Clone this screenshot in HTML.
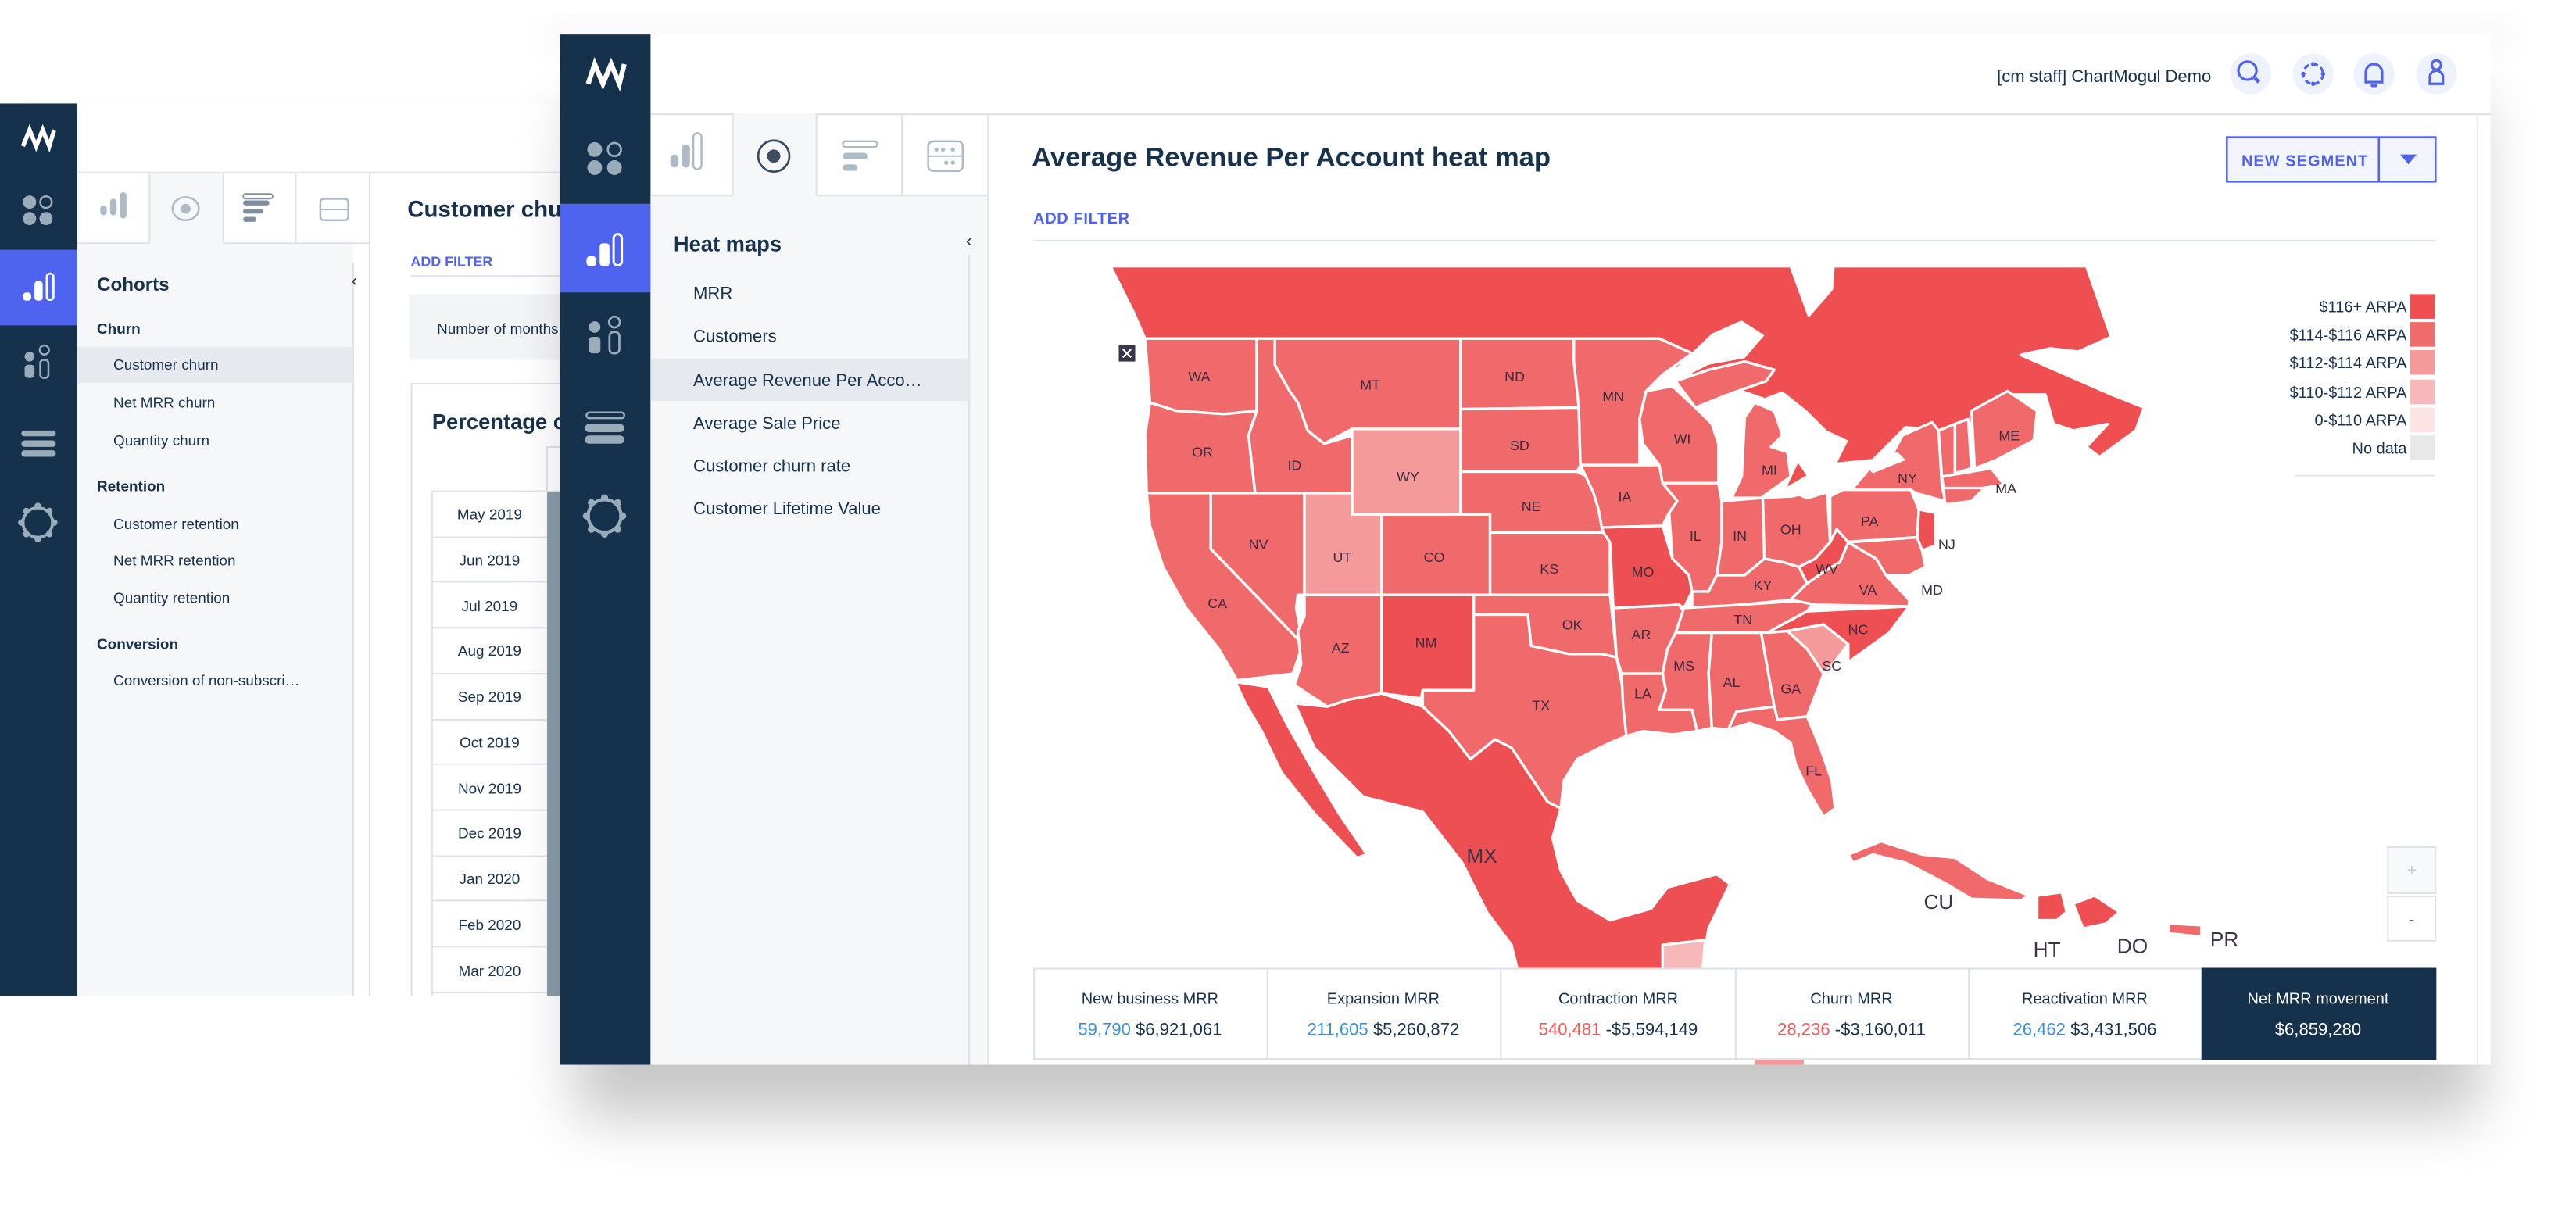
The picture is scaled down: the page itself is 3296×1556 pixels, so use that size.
<!DOCTYPE html>
<html><head><meta charset="utf-8"><style>
html,body{margin:0;padding:0;background:#fff;width:3296px;height:1556px;overflow:hidden}
svg{display:block}
text{font-family:"Liberation Sans",sans-serif}
</style></head><body>
<svg width="3296" height="1556" viewBox="0 0 1568 740" preserveAspectRatio="none" xmlns="http://www.w3.org/2000/svg">
<defs>
<filter id="sh" x="-20%" y="-20%" width="140%" height="150%"><feGaussianBlur stdDeviation="18"/></filter>
<filter id="sh2" x="-20%" y="-20%" width="140%" height="150%"><feGaussianBlur stdDeviation="10"/></filter>
<clipPath id="mapclip"><rect x="602" y="150" width="906" height="498"/></clipPath>
</defs>
<rect width="1568" height="740" fill="#fff"/>
<!-- back window shadow -->
<rect x="5" y="70" width="340" height="545" fill="#000" opacity="0.05" filter="url(#sh2)"/>
<!-- BACK WINDOW -->
<rect x="0" y="63" width="341" height="543" fill="#fff"/>
<rect x="0" y="63" width="47" height="543" fill="#15314b"/>
<rect x="0" y="152" width="47" height="46" fill="#4e63ee"/>
<polyline points="14,89 18,79 22,89 26,79 30,89 33,79" fill="none" stroke="#fff" stroke-width="2.6" stroke-linejoin="miter"/>
<g fill="#9aabb9"><circle cx="18" cy="123" r="4"/><circle cx="18" cy="133" r="4"/><circle cx="28" cy="133" r="4"/></g>
<circle cx="28" cy="123" r="3.5" fill="none" stroke="#9aabb9" stroke-width="1.2"/>
<g fill="#fff"><rect x="14" y="178" width="5" height="5" rx="2"/><rect x="21" y="171" width="5" height="12" rx="2"/></g>
<rect x="28.5" y="166.5" width="4" height="16" rx="2" fill="none" stroke="#fff" stroke-width="1.3"/>
<g fill="#9aabb9"><circle cx="18" cy="217" r="3"/><rect x="15" y="222" width="6" height="8" rx="2"/></g>
<circle cx="27" cy="213" r="2.8" fill="none" stroke="#9aabb9" stroke-width="1.2"/><rect x="24.5" y="219" width="5" height="11" rx="2" fill="none" stroke="#9aabb9" stroke-width="1.2"/>
<g fill="#9aabb9"><rect x="13" y="262" width="21" height="3.5" rx="1.7"/><rect x="13" y="268" width="21" height="4" rx="2"/><rect x="13" y="274" width="21" height="4" rx="2"/></g>
<circle cx="23" cy="318" r="9" fill="none" stroke="#9aabb9" stroke-width="1.8"/>
<g fill="#9aabb9"><circle cx="23" cy="308" r="2"/><circle cx="23" cy="328" r="2"/><circle cx="13" cy="318" r="2"/><circle cx="33" cy="318" r="2"/><circle cx="16" cy="311" r="2"/><circle cx="30" cy="311" r="2"/><circle cx="16" cy="325" r="2"/><circle cx="30" cy="325" r="2"/></g>
<!-- back header/tabs -->
<line x1="47" y1="105" x2="341" y2="105" stroke="#dfe3e8"/>
<rect x="47" y="148" width="168" height="458" fill="#f5f7f9"/>
<rect x="91" y="105" width="45" height="44" fill="#f5f7f9"/>
<g stroke="#dfe3e8" fill="none"><line x1="91" y1="105" x2="91" y2="148"/><line x1="136" y1="105" x2="136" y2="148"/><line x1="180" y1="105" x2="180" y2="148"/><line x1="225" y1="105" x2="225" y2="606"/><line x1="47" y1="148" x2="91" y2="148"/><line x1="136" y1="148" x2="225" y2="148"/><line x1="215" y1="160" x2="215" y2="606"/></g>
<g fill="#aebbc7"><rect x="61" y="125" width="4" height="6" rx="2"/><rect x="67" y="121" width="4" height="10" rx="2"/><rect x="73" y="117" width="4" height="16" rx="2"/></g>
<ellipse cx="113" cy="127" rx="8" ry="7" fill="none" stroke="#aebbc7" stroke-width="1.2"/><circle cx="113" cy="127" r="3" fill="#aebbc7"/>
<g fill="#7f8fa0"><rect x="148" y="122" width="16" height="3" rx="1.5"/><rect x="148" y="127" width="12" height="3" rx="1.5"/><rect x="148" y="132" width="8" height="3" rx="1.5"/></g>
<rect x="148" y="118" width="18" height="3" rx="1.5" fill="none" stroke="#7f8fa0" stroke-width="0.8"/>
<rect x="195" y="121" width="17" height="13" rx="2" fill="none" stroke="#aebbc7" stroke-width="1.2"/><line x1="195" y1="127.5" x2="212" y2="127.5" stroke="#aebbc7"/>
<text x="59" y="177" font-size="11.5" font-weight="bold" fill="#17324d">Cohorts</text>
<text x="214" y="174" font-size="10" fill="#17324d">‹</text>
<rect x="47" y="211" width="168" height="22" fill="#e6eaee"/>
<g font-size="9" fill="#17324d">
<text x="59" y="203" font-weight="bold">Churn</text>
<text x="69" y="225">Customer churn</text><text x="69" y="248">Net MRR churn</text><text x="69" y="271">Quantity churn</text>
<text x="59" y="299" font-weight="bold">Retention</text>
<text x="69" y="322">Customer retention</text><text x="69" y="344">Net MRR retention</text><text x="69" y="367">Quantity retention</text>
<text x="59" y="395" font-weight="bold">Conversion</text>
<text x="69" y="417">Conversion of non-subscri…</text>
</g>
<text x="248" y="132" font-size="14" font-weight="bold" fill="#17324d">Customer churn</text>
<text x="250" y="162" font-size="8.5" font-weight="bold" fill="#4e63ee">ADD FILTER</text>
<line x1="250" y1="168" x2="341" y2="168" stroke="#dfe3e8"/>
<rect x="249" y="179" width="92" height="40" fill="#f2f4f6"/>
<text x="266" y="203" font-size="9" fill="#17324d">Number of months</text>
<rect x="250.5" y="233.5" width="100" height="380" fill="#fff" stroke="#dfe3e8"/>
<text x="263" y="261" font-size="13" font-weight="bold" fill="#17324d">Percentage of</text>
<rect x="333" y="272" width="10" height="334" fill="#8a9caa"/>
<rect x="333" y="272" width="10" height="27" fill="#fff" stroke="#dfe3e8"/>
<g font-size="9" fill="#17324d" text-anchor="middle" stroke="none">
<text x="298" y="316">May 2019</text><text x="298" y="344">Jun 2019</text><text x="298" y="372">Jul 2019</text><text x="298" y="399">Aug 2019</text><text x="298" y="427">Sep 2019</text><text x="298" y="455">Oct 2019</text><text x="298" y="483">Nov 2019</text><text x="298" y="510">Dec 2019</text><text x="298" y="538">Jan 2020</text><text x="298" y="566">Feb 2020</text><text x="298" y="594">Mar 2020</text>
</g>
<g stroke="#dfe3e8"><line x1="263" y1="299" x2="333" y2="299"/><line x1="263" y1="327" x2="333" y2="327"/><line x1="263" y1="354" x2="333" y2="354"/><line x1="263" y1="382" x2="333" y2="382"/><line x1="263" y1="410" x2="333" y2="410"/><line x1="263" y1="438" x2="333" y2="438"/><line x1="263" y1="465" x2="333" y2="465"/><line x1="263" y1="493" x2="333" y2="493"/><line x1="263" y1="521" x2="333" y2="521"/><line x1="263" y1="548" x2="333" y2="548"/><line x1="263" y1="576" x2="333" y2="576"/><line x1="263" y1="604" x2="333" y2="604"/><line x1="263" y1="299" x2="263" y2="606"/></g>
<rect x="0" y="606" width="345" height="134" fill="#fff"/>

<!-- FRONT WINDOW SHADOW -->
<rect x="350" y="60" width="1160" height="620" fill="#000" opacity="0.22" filter="url(#sh)"/>
<rect x="330" y="12" width="1200" height="20" fill="#000" opacity="0.03" filter="url(#sh2)"/>
<!-- FRONT WINDOW -->
<rect x="341" y="21" width="1175" height="627" fill="#fff"/>
<rect x="341" y="21" width="55" height="627" fill="#15314b"/>
<rect x="341" y="124" width="55" height="54" fill="#4e63ee"/>
<polyline points="358,51 362,39 367,51 372,39 377,51 380,39" fill="none" stroke="#fff" stroke-width="3" stroke-linejoin="miter"/>
<g fill="#9aabb9"><circle cx="362" cy="91" r="4.5"/><circle cx="362" cy="102" r="4.5"/><circle cx="374" cy="102" r="4.5"/></g>
<circle cx="374" cy="91" r="4" fill="none" stroke="#9aabb9" stroke-width="1.3"/>
<g fill="#fff"><rect x="357" y="156" width="6" height="6" rx="2"/><rect x="365" y="148" width="6" height="14" rx="2"/></g>
<rect x="373.5" y="142.5" width="5" height="19" rx="2.5" fill="none" stroke="#fff" stroke-width="1.4"/>
<g fill="#9aabb9"><circle cx="362" cy="199" r="3.5"/><rect x="358.5" y="205" width="7" height="10" rx="2"/></g>
<circle cx="374" cy="196" r="3.3" fill="none" stroke="#9aabb9" stroke-width="1.3"/><rect x="371" y="202" width="6" height="13" rx="2.5" fill="none" stroke="#9aabb9" stroke-width="1.3"/>
<g fill="#9aabb9"><rect x="357" y="251" width="23" height="3.5" rx="1.7" fill="none" stroke="#9aabb9" stroke-width="1.2"/><rect x="356" y="258" width="24" height="5" rx="2.5"/><rect x="356" y="265" width="24" height="5" rx="2.5"/></g>
<circle cx="368" cy="314" r="10" fill="none" stroke="#9aabb9" stroke-width="2"/>
<g fill="#9aabb9"><circle cx="368" cy="303" r="2.2"/><circle cx="368" cy="325" r="2.2"/><circle cx="357" cy="314" r="2.2"/><circle cx="379" cy="314" r="2.2"/><circle cx="360" cy="306" r="2.2"/><circle cx="376" cy="306" r="2.2"/><circle cx="360" cy="322" r="2.2"/><circle cx="376" cy="322" r="2.2"/></g>
<!-- header -->
<line x1="396" y1="69.5" x2="1516" y2="69.5" stroke="#dbe1e7"/>
<text x="1346" y="50" font-size="10.5" fill="#17324d" text-anchor="end">[cm staff] ChartMogul Demo</text>
<g fill="#eef2fd"><circle cx="1370" cy="45" r="12.5"/><circle cx="1408" cy="45" r="12.5"/><circle cx="1445" cy="45" r="12.5"/><circle cx="1483" cy="45" r="12.5"/></g>
<g fill="none" stroke="#4e63ee" stroke-width="1.5">
<circle cx="1368" cy="43" r="5.5"/><line x1="1372.5" y1="47.5" x2="1375" y2="50" stroke-width="2.2"/>
<circle cx="1408" cy="45" r="6" stroke-dasharray="3.5 2"/>
<path d="M1440,50 L1440,44 A5,5 0 0 1 1450,44 L1450,50 Z"/>
<circle cx="1483" cy="39.5" r="2.8"/><path d="M1479,51 L1479,47 A4,4 0 0 1 1487,47 L1487,51 Z"/>
</g>
<g fill="#4e63ee"><circle cx="1408" cy="39" r="1.3"/><circle cx="1408" cy="51" r="1.3"/><circle cx="1402" cy="45" r="1.3"/><circle cx="1414" cy="45" r="1.3"/><rect x="1443" y="51" width="4" height="2" rx="1"/></g>
<!-- tabs -->
<rect x="446" y="69" width="51" height="51" fill="#f5f7f9"/>
<rect x="396" y="119" width="205" height="529" fill="#f5f7f9"/>
<g stroke="#dfe3e8" fill="none"><line x1="446" y1="69" x2="446" y2="119"/><line x1="497" y1="69" x2="497" y2="119"/><line x1="549" y1="69" x2="549" y2="119"/><line x1="601.5" y1="69" x2="601.5" y2="648"/><line x1="396" y1="119" x2="446" y2="119"/><line x1="497" y1="119" x2="601" y2="119"/><line x1="590" y1="155" x2="590" y2="648"/></g>
<g fill="#aebbc7"><rect x="408" y="94" width="5" height="8" rx="2.5"/><rect x="415" y="88" width="5" height="14" rx="2.5"/><rect x="422" y="81" width="5" height="22" rx="2.5" fill="none" stroke="#aebbc7" stroke-width="1.2"/></g>
<circle cx="471" cy="95" r="9.5" fill="none" stroke="#3b4d61" stroke-width="1.3"/><circle cx="471" cy="95" r="4" fill="#3b4d61"/>
<rect x="513" y="86" width="21" height="3.5" rx="1.7" fill="none" stroke="#aebbc7" stroke-width="1.1"/><rect x="513" y="93" width="15" height="4" rx="2" fill="#aebbc7"/><rect x="513" y="100" width="9" height="4" rx="2" fill="#aebbc7"/>
<rect x="565" y="86" width="21" height="18" rx="3" fill="none" stroke="#aebbc7" stroke-width="1.2"/><line x1="565" y1="95" x2="586" y2="95" stroke="#aebbc7"/>
<g fill="#aebbc7"><circle cx="570" cy="91" r="1.3"/><circle cx="574" cy="91" r="1.3"/><circle cx="580" cy="91" r="1.3"/><circle cx="576" cy="99" r="1.3"/><circle cx="580" cy="99" r="1.3"/></g>
<text x="410" y="153" font-size="13" font-weight="bold" fill="#17324d">Heat maps</text>
<text x="588" y="150" font-size="11" fill="#17324d">‹</text>
<rect x="396" y="218" width="194" height="26" fill="#e6eaee"/>
<g font-size="10.5" fill="#17324d">
<text x="422" y="182">MRR</text><text x="422" y="208">Customers</text><text x="422" y="235">Average Revenue Per Acco…</text><text x="422" y="261">Average Sale Price</text><text x="422" y="287">Customer churn rate</text><text x="422" y="313">Customer Lifetime Value</text>
</g>
<!-- main -->
<line x1="1508" y1="70" x2="1508" y2="648" stroke="#e8ecef"/>
<text x="628" y="101" font-size="16.5" font-weight="bold" fill="#17324d">Average Revenue Per Account heat map</text>
<rect x="1355.5" y="83.5" width="127" height="27" fill="#f3f5fe" stroke="#4e63ee" stroke-width="1.2"/>
<line x1="1448" y1="84" x2="1448" y2="110" stroke="#4e63ee" stroke-width="1.2"/>
<text x="1403" y="101" font-size="9.5" font-weight="bold" fill="#4e63ee" text-anchor="middle" letter-spacing="0.5">NEW SEGMENT</text>
<path d="M1461,94 L1471,94 L1466,100 Z" fill="#4e63ee"/>
<text x="629" y="136" font-size="9.5" font-weight="bold" fill="#4e63ee" letter-spacing="0.3">ADD FILTER</text>
<line x1="629" y1="146.5" x2="1482" y2="146.5" stroke="#dfe4ea"/>

<!-- MAP -->
<g clip-path="url(#mapclip)" stroke="#fff" stroke-width="1.6" stroke-linejoin="round">
<polygon fill="#ef4f51" points="676,162 1090,162 1101,192 1115,176 1116,162 1270,162 1285,205 1265,214 1248,212 1230,216 1262,230 1285,240 1305,248 1300,262 1278,278 1270,272 1283,258 1262,262 1250,258 1245,240 1225,240 1210,255 1180,262 1160,260 1140,280 1110,283 1100,290 1086,298 1100,268 1080,245 1060,238 1040,232 1010,220 1000,206 697,206 690,190"/>
<g fill="#f06a6b">
<polygon points="697,206 765,206 765,250 745,252 716,250 700,245"/>
<polygon points="700,245 716,250 745,252 765,250 760,265 764,300 698,300 697,265"/>
<polygon points="698,300 737,300 737,334 793,392 787,410 753,414 742,395 722,370 708,345 700,320"/>
<polygon points="737,300 794,300 794,362 790,362 789,370 793,392 737,334"/>
<polygon points="765,206 776,206 776,222 785,238 790,245 796,262 806,270 823,265 823,300 794,300 764,300 760,265 765,250"/>
<polygon points="776,206 889,206 889,261 823,261 806,270 796,262 790,245 785,238 776,222"/>
<polygon points="841,313 907,313 907,362 841,362"/>
<polygon points="794,362 841,362 841,422 820,426 808,430 788,417 792,404 790,384 794,375"/>
<polygon points="889,206 958,206 961,248 889,249"/>
<polygon points="889,249 961,248 962,283 960,287 889,287"/>
<polygon points="889,287 960,287 970,292 975,310 976,324 907,324 907,313 889,313"/>
<polygon points="907,324 976,324 980,330 980,362 907,362"/>
<polygon points="897,362 980,362 982,380 984,400 975,398 955,398 932,393 930,374 897,374"/>
<polygon points="897,374 930,374 932,393 955,398 975,398 984,400 988,420 994,440 992,447 980,452 960,462 952,475 950,492 942,488 930,470 920,455 910,450 895,462 882,445 866,430 866,420 897,420"/>
<polygon points="958,206 1010,206 1030,215 1012,228 1002,238 998,255 998,283 962,283 961,248 958,220"/>
<polygon points="962,283 1010,283 1018,295 1021,305 1016,312 1012,320 975,321 973,310 970,300"/>
<polygon points="982,370 1022,368 1025,372 1020,385 1015,395 1012,410 987,410 984,400"/>
<polygon points="987,410 1012,410 1014,420 1010,432 1030,432 1033,445 1018,447 1000,445 990,448 988,430"/>
<polygon points="1002,238 1018,235 1032,248 1042,258 1046,270 1046,294 1012,294 1010,283 1000,270 998,255"/>
<polygon points="1012,294 1046,294 1048,305 1048,330 1045,350 1040,360 1028,360 1028,350 1018,340 1016,312 1021,305"/>
<polygon points="1048,305 1073,303 1074,340 1062,350 1045,350 1048,330"/>
<polygon points="1058,260 1068,245 1080,250 1085,265 1078,272 1088,275 1090,290 1072,303 1050,303 1052,285"/>
<polygon points="1020,232 1040,225 1062,220 1080,225 1075,232 1052,240 1032,248"/>
<polygon points="1073,303 1091,302 1112,297 1114,330 1105,340 1095,345 1085,342 1074,340"/>
<polygon points="1045,350 1062,350 1074,340 1085,342 1095,345 1100,355 1090,365 1060,368 1030,370 1030,360 1040,360"/>
<polygon points="1025,370 1060,368 1105,365 1100,372 1085,380 1076,385 1020,385"/>
<polygon points="1020,385 1042,385 1040,410 1042,443 1033,445 1030,432 1010,432 1014,420 1012,410 1015,395"/>
<polygon points="1042,385 1072,385 1080,430 1057,433 1052,444 1042,443 1040,410"/>
<polygon points="1072,385 1088,384 1100,395 1110,410 1107,418 1100,436 1082,438 1080,430"/>
<polygon points="1052,444 1057,433 1080,430 1082,438 1100,436 1108,455 1115,475 1117,492 1110,497 1100,480 1093,465 1090,452 1080,445 1065,440"/>
<polygon points="1090,365 1100,355 1110,348 1120,342 1125,330 1142,340 1148,350 1162,365 1162,369 1105,368"/>
<polygon points="1114,302 1122,298 1163,298 1168,310 1167,327 1120,330 1114,330"/>
<polygon points="1127,298 1138,285 1150,280 1158,265 1176,257 1180,262 1182,295 1184,305 1166,300 1163,298"/>
<polygon points="1125,330 1167,327 1170,335 1172,345 1162,350 1148,350 1142,340"/>
<polygon points="1180,262 1190,258 1190,290 1182,290"/>
<polygon points="1190,258 1198,255 1200,285 1190,288"/>
<polygon points="1200,250 1222,238 1240,250 1238,268 1215,280 1202,285"/>
<polygon points="1182,290 1212,285 1220,295 1200,298 1183,297"/>
<polygon points="1183,297 1208,297 1200,305 1184,307"/>
<polygon points="1125,520 1145,512 1170,520 1190,522 1210,535 1235,545 1230,548 1200,547 1185,538 1160,525 1140,520 1128,525"/>
<polygon points="1320,562 1340,563 1340,570 1320,568"/>
</g>
<g fill="#f49a9a">
<polygon points="823,261 889,261 889,313 823,313"/>
<polygon points="794,300 823,300 823,313 841,313 841,362 794,362"/>
<polygon points="1088,384 1110,380 1125,392 1115,405 1110,410 1100,395"/>
</g>
<g fill="#ee4f52">
<polygon points="841,362 897,362 897,420 866,420 865,425 841,422"/>
<polygon points="975,321 1012,320 1018,340 1028,350 1030,360 1025,370 1022,368 982,370 980,330 976,324"/>
<polygon points="1076,385 1085,380 1100,372 1162,369 1150,385 1125,403 1125,392 1110,380 1088,384"/>
<polygon points="1095,345 1105,340 1114,330 1118,322 1125,330 1120,342 1110,348 1100,355"/>
<polygon points="1168,310 1178,312 1178,332 1170,335 1167,327"/>
<polygon points="788,428 808,430 820,426 841,422 866,430 882,445 895,462 910,450 920,455 930,470 942,488 950,492 945,510 950,530 960,548 980,560 1005,553 1015,540 1045,532 1053,538 1040,565 1035,595 925,595 920,575 905,555 890,525 866,494 830,485 800,455"/>
<polygon points="752,415 772,418 783,440 800,470 815,495 832,520 826,522 800,495 780,470 768,445 758,428"/>
<polygon points="1240,545 1255,543 1258,555 1252,560 1240,560"/>
<polygon points="1262,550 1275,545 1290,555 1282,562 1268,565"/>
</g>
<polygon points="1012,575 1038,572 1036,595 1012,595" fill="#f7b8b9"/>
<g fill="#fff" stroke="none">
<polygon points="1006,233 1020,224 1042,203 1060,195 1074,204 1062,218 1040,222 1020,232"/>
<polygon points="1046,250 1055,245 1063,250 1061,290 1054,305 1048,300"/>
<polygon points="1072,243 1085,238 1100,250 1112,262 1125,268 1118,282 1100,290 1090,275 1085,262 1080,252"/>
<polygon points="1091,300 1110,290 1126,288 1120,298 1100,304"/>
<polygon points="1135,283 1155,275 1160,280 1140,288"/>
</g>
</g>
<g font-size="8.5" fill="#3b2b3d" text-anchor="middle">
<text x="730" y="232">WA</text><text x="732" y="278">OR</text><text x="741" y="370">CA</text><text x="766" y="334">NV</text><text x="788" y="286">ID</text><text x="834" y="237">MT</text><text x="857" y="293">WY</text><text x="817" y="342">UT</text><text x="873" y="342">CO</text><text x="816" y="397">AZ</text><text x="868" y="394">NM</text><text x="922" y="232">ND</text><text x="925" y="274">SD</text><text x="932" y="311">NE</text><text x="943" y="349">KS</text><text x="957" y="383">OK</text><text x="938" y="432">TX</text><text x="982" y="244">MN</text><text x="989" y="305">IA</text><text x="1000" y="351">MO</text><text x="999" y="389">AR</text><text x="1000" y="425">LA</text><text x="1024" y="270">WI</text><text x="1032" y="329">IL</text><text x="1077" y="289">MI</text><text x="1059" y="329">IN</text><text x="1090" y="325">OH</text><text x="1073" y="359">KY</text><text x="1061" y="380">TN</text><text x="1025" y="408">MS</text><text x="1054" y="418">AL</text><text x="1090" y="422">GA</text><text x="1104" y="472">FL</text><text x="1115" y="408">SC</text><text x="1131" y="386">NC</text><text x="1137" y="362">VA</text><text x="1112" y="349">WV</text><text x="1138" y="320">PA</text><text x="1161" y="294">NY</text><text x="1223" y="268">ME</text><text x="1221" y="300">MA</text><text x="1185" y="334">NJ</text><text x="1176" y="362">MD</text>
</g>
<g font-size="12.5" fill="#3d3345" text-anchor="middle">
<text x="902" y="525">MX</text><text x="1180" y="553">CU</text><text x="1246" y="582">HT</text><text x="1298" y="580">DO</text><text x="1354" y="576">PR</text>
</g>
<rect x="681" y="210" width="10" height="10" fill="#3a3548"/>
<path d="M683.5,212.5 L688.5,217.5 M688.5,212.5 L683.5,217.5" stroke="#fff" stroke-width="1"/>
<!-- legend -->
<g font-size="9.5" fill="#17324d" text-anchor="end">
<text x="1465" y="190">$116+ ARPA</text><text x="1465" y="207">$114-$116 ARPA</text><text x="1465" y="224">$112-$114 ARPA</text><text x="1465" y="242">$110-$112 ARPA</text><text x="1465" y="259">0-$110 ARPA</text><text x="1465" y="276">No data</text>
</g>
<rect x="1467" y="179" width="15" height="15" fill="#ef4f51"/><rect x="1467" y="196" width="15" height="15" fill="#f06b6c"/><rect x="1467" y="213" width="15" height="15" fill="#f49a9a"/><rect x="1467" y="231" width="15" height="15" fill="#f7b8b9"/><rect x="1467" y="248" width="15" height="15" fill="#fde3e4"/><rect x="1467" y="265" width="15" height="15" fill="#e8e8e8"/>
<line x1="1397" y1="289.5" x2="1482" y2="289.5" stroke="#dfe4ea"/>
<!-- zoom -->
<rect x="1453.5" y="515.5" width="29" height="28" fill="#f8f9fa" stroke="#dde3e9"/>
<text x="1468" y="533" font-size="10" fill="#c5ccd3" text-anchor="middle">+</text>
<rect x="1453.5" y="545.5" width="29" height="27" fill="#fff" stroke="#dde3e9"/>
<text x="1468" y="563" font-size="10" fill="#17324d" text-anchor="middle">-</text>
<!-- stats -->
<rect x="629.5" y="589.5" width="853" height="55" fill="#fff" stroke="#dbe1e7"/>
<rect x="1340" y="589" width="143" height="56" fill="#15314b"/>
<g stroke="#dbe1e7"><line x1="771.5" y1="589" x2="771.5" y2="645"/><line x1="913.5" y1="589" x2="913.5" y2="645"/><line x1="1056.5" y1="589" x2="1056.5" y2="645"/><line x1="1198.5" y1="589" x2="1198.5" y2="645"/></g>
<g font-size="9.5" fill="#17324d" text-anchor="middle">
<text x="700" y="611">New business MRR</text><text x="842" y="611">Expansion MRR</text><text x="985" y="611">Contraction MRR</text><text x="1127" y="611">Churn MRR</text><text x="1269" y="611">Reactivation MRR</text><text x="1411" y="611" fill="#fff">Net MRR movement</text>
</g>
<g font-size="10.5" text-anchor="middle">
<text x="700" y="630"><tspan fill="#3a8fd8">59,790</tspan><tspan fill="#17324d">  $6,921,061</tspan></text>
<text x="842" y="630"><tspan fill="#3a8fd8">211,605</tspan><tspan fill="#17324d">  $5,260,872</tspan></text>
<text x="985" y="630"><tspan fill="#ef5a5a">540,481</tspan><tspan fill="#17324d">  -$5,594,149</tspan></text>
<text x="1127" y="630"><tspan fill="#ef5a5a">28,236</tspan><tspan fill="#17324d">  -$3,160,011</tspan></text>
<text x="1269" y="630"><tspan fill="#3a8fd8">26,462</tspan><tspan fill="#17324d">  $3,431,506</tspan></text>
<text x="1411" y="630" fill="#fff">$6,859,280</text>
</g>
<rect x="1068" y="645" width="30" height="3" fill="#f49a9a"/>
</svg>
</body></html>
